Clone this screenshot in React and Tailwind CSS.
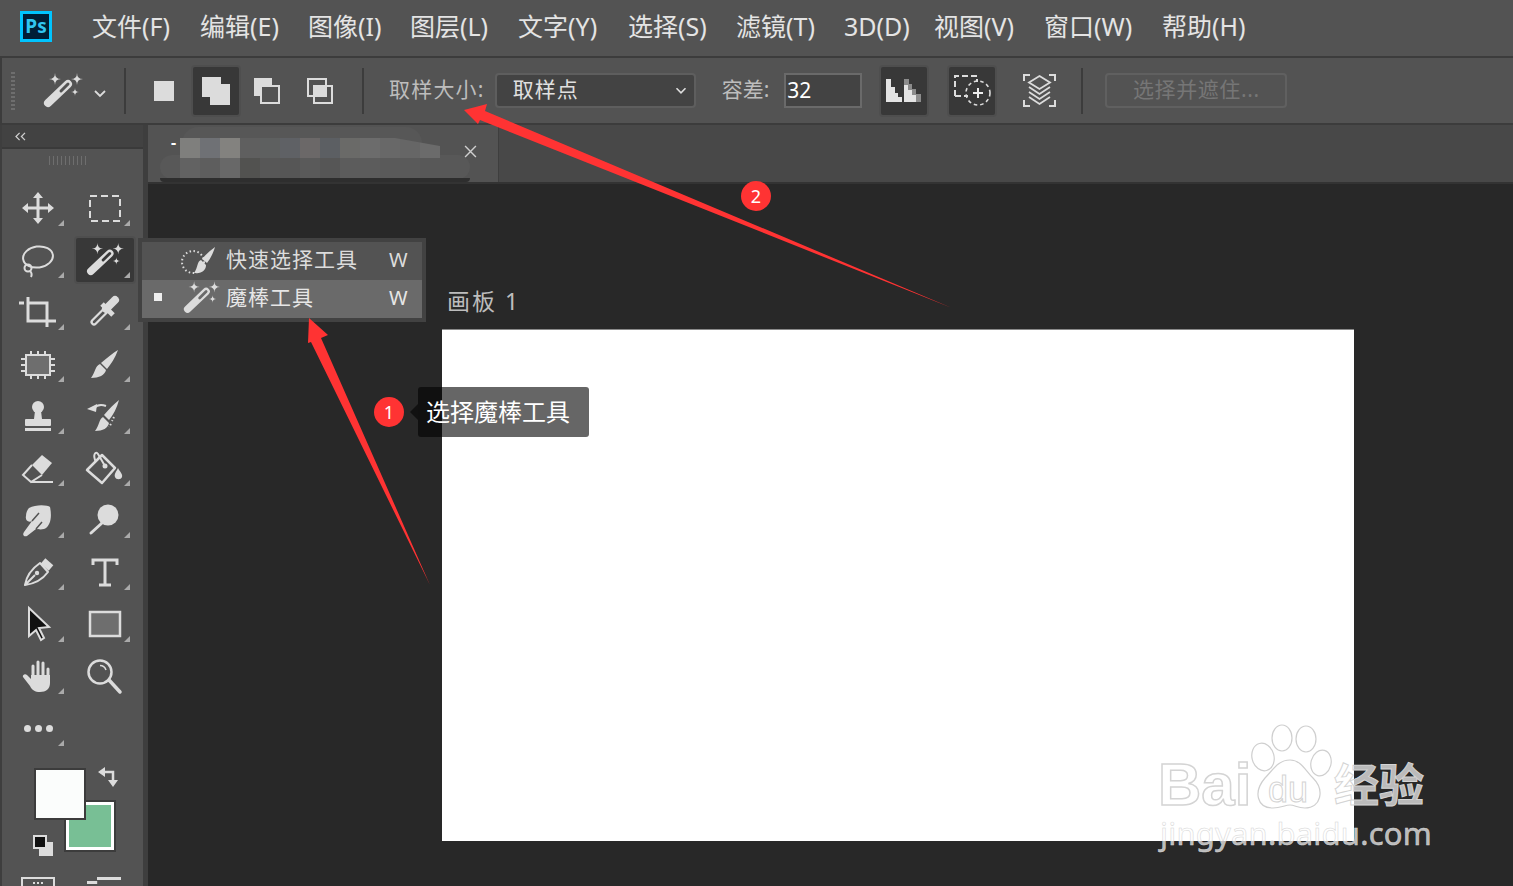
import React from "react";

const L = "#dcdcdc";
const star = (cx, cy, r) => `M${cx} ${cy - r}Q${cx} ${cy} ${cx + r} ${cy}Q${cx} ${cy} ${cx} ${cy + r}Q${cx} ${cy} ${cx - r} ${cy}Q${cx} ${cy} ${cx} ${cy - r}Z`;

function Wand({ bg = "#535353", className = "w-[40px] h-[36px]" }) {
  return (
    <svg viewBox="0 0 40 36" className={className}>
      <path d={star(12, 6, 6) + star(34, 6, 6) + star(32, 19, 4)} fill={L} />
      <line x1="5" y1="30" x2="25" y2="11" stroke={L} strokeWidth="8" strokeLinecap="round" />
      <line x1="18" y1="18" x2="25" y2="11" stroke={bg} strokeWidth="3" strokeLinecap="round" />
    </svg>
  );
}

const S = { fill: "none", stroke: L, strokeWidth: 2.5 };
const icons = {
  move: <g><path d="M20 8V32M8 20H32" {...S} strokeWidth="3" /><path d="M20 4l5 6H15zM20 36l5-6H15zM4 20l6-5V25zM36 20l-6-5V25z" fill={L} /></g>,
  marquee: <rect x="5" y="8" width="30" height="25" {...S} strokeWidth="2" strokeDasharray="7 4" />,
  lasso: <g {...S} strokeWidth="2"><ellipse cx="20" cy="17" rx="15" ry="10.5" transform="rotate(-8 20 17)" /><circle cx="10" cy="28" r="3.5" /><path d="M12 31C14 33 14 35 13 37" /></g>,
  crop: <path d="M1 11H6M10 5V29H32M10 11H29V35M32 29H38" {...S} strokeWidth="3" />,
  dropper: <g><line x1="9" y1="30" x2="22" y2="17" stroke={L} strokeWidth="7" strokeLinecap="round" /><line x1="9" y1="30" x2="21" y2="18" stroke="#535353" strokeWidth="2.5" strokeLinecap="round" /><line x1="21" y1="17" x2="30" y2="8" stroke={L} strokeWidth="8" strokeLinecap="round" /><line x1="17" y1="12" x2="28" y2="23" stroke={L} strokeWidth="5" /></g>,
  chip: <g><path d="M13 7V35M20 7V35M27 7V35M3 15H37M3 21H37M3 27H37" {...S} strokeWidth="2" /><rect x="8" y="11" width="24" height="20" fill="#6e6e6e" stroke={L} strokeWidth="2" /></g>,
  brush: <path d="M33 6C30 14 26 20 22 25L16 19C22 14 28 9 33 6ZM15 20C10 22 10 29 6 34C14 34 20 31 21 26Z" fill={L} />,
  stamp: <g fill={L}><circle cx="20" cy="11" r="6" /><path d="M17 15H23L24 23H16Z" /><rect x="7" y="23" width="26" height="7" rx="1" /><rect x="7" y="32" width="26" height="3" /></g>,
  history: <g><path d="M34 4C32 12 28 19 24 24L19 19C24 13 29 8 34 4ZM18 21C14 23 14 30 10 35C18 35 23 32 24 27Z" fill={L} /><path d="M21 10C16 8 12 9 9 12" {...S} strokeWidth="2" /><path d="M2 13L12 8L11 16Z" fill={L} /><path d="M29 21L27 25M26 28L24 31" {...S} strokeWidth="2" strokeDasharray="1.5 2" /></g>,
  eraser: <g><path d="M24 7L34 15L24 27L14 17Z" fill={L} /><path d="M14 17L5 27L13 34L24 27M13 34H35" {...S} strokeWidth="2" /></g>,
  bucket: <g><path d="M2 22L17 7L30 20L17 35Z" {...S} strokeWidth="2.5" strokeLinejoin="round" /><path d="M11 14C7 6 11 3 13 6L20 18" {...S} strokeWidth="2" /><circle cx="20" cy="18" r="2.5" fill={L} /><path d="M33 20C31 24 29 26 30 29C31 32 36 32 37 29C38 26 35 24 33 20Z" fill={L} /></g>,
  smudge: <g><path d="M11 8C18 4 30 5 32 7C34 16 33 26 26 29C22 30 20 29 18 29L9 36C6 37 4 35 6 32L14 21C10 23 7 20 8 16C8 13 9 10 11 8Z" fill={L} /><path d="M14 21L21 13M18 29L24 22" stroke="#535353" strokeWidth="1.5" /></g>,
  dodge: <g><circle cx="23" cy="15" r="10.5" fill={L} /><line x1="6" y1="33" x2="17" y2="23" stroke={L} strokeWidth="3" strokeLinecap="round" /></g>,
  pen: <g><path d="M7 33Q9 20 22 11L30 20Q22 31 7 33ZM7 33L17 23" {...S} strokeWidth="2" strokeLinejoin="round" /><line x1="25" y1="9" x2="33" y2="16" stroke={L} strokeWidth="7" /><circle cx="19" cy="21" r="2.2" fill={L} /></g>,
  type: <path d="M8 13V8H32V13M20 8V33M14 33H26" {...S} strokeWidth="3" />,
  select: <path d="M11 4L31 23L21 24L26 34L23 36L18 26L11 32Z" fill="#111" stroke={L} strokeWidth="2" />,
  rect: <rect x="5" y="8" width="30" height="24" fill="#6e6e6e" stroke={L} strokeWidth="2.5" />,
  hand: <g><path d="M15 20V10M20 20V6M25 20V7M30 23V13" stroke={L} strokeWidth="3" strokeLinecap="round" /><path d="M13 19H32V27C32 33 28 36 22 36C17 36 14 34 12 30L5 21C4 19 7 17 9 19L13 23Z" fill={L} /></g>,
  zoom: <g {...S} strokeWidth="2.5"><circle cx="15" cy="16" r="11.5" /><path d="M24 24L35 36" strokeWidth="3.5" strokeLinecap="round" /><path d="M15 9.5C18 9.5 20 11 21 14" strokeWidth="1.5" /></g>,
};

function Tool({ name, active, corner = true, col }) {
  return (
    <div className="relative flex items-center justify-center">
      {active && <div className="absolute left-[2px] right-[2px] top-[2px] bottom-[2px] rounded-[4px] bg-[#383838] border-2 border-[#4e4e4e]" />}
      {active ? (
        <div className="relative"><Wand bg="#383838" className="w-[38px] h-[34px]" /></div>
      ) : (
        <svg viewBox="0 0 40 40" className="w-[40px] h-[40px] relative">{icons[name]}</svg>
      )}
      {corner && <div className={`absolute bottom-[8px] ${col === 1 ? "right-[7px]" : "right-[8px]"} w-[6px] h-[6px] bg-[#aaaaaa] [clip-path:polygon(100%_0,100%_100%,0_100%)]`} />}
    </div>
  );
}

const tools = [
  ["move", "marquee"], ["lasso", "wand"], ["crop", "dropper"], ["chip", "brush"], ["stamp", "history"],
  ["eraser", "bucket"], ["smudge", "dodge"], ["pen", "type"], ["select", "rect"], ["hand", "zoom"],
];
const menu = [
  ["文件(F)", "w-[108px]"], ["编辑(E)", "w-[108px]"], ["图像(I)", "w-[102px]"], ["图层(L)", "w-[108px]"],
  ["文字(Y)", "w-[110px]"], ["选择(S)", "w-[108px]"], ["滤镜(T)", "w-[108px]"], ["3D(D)", "w-[90px]"],
  ["视图(V)", "w-[110px]"], ["窗口(W)", "w-[118px]"], ["帮助(H)", "w-[90px]"],
];
const row1 = ["#7f7f7d", "#6f7175", "#83827f", "#5f5f5f", "#5e6060", "#5f6165", "#6b6868", "#5c5f63", "#6a6a68", "#6c6c6c", "#686868", "#666666", "#6b6b6b"];
const row2 = ["#626262", "#5e5e5e", "#686868", "#525250", "#575757", "#565656", "#5a5a5a", "#565656", "#5c5c5c", "#5c5c5c", "#5a5a5a", "#5a5a5a", "#585858"];

const DarkBtn = ({ children, cls }) => (
  <div className={`w-[50px] h-[52px] shrink-0 rounded-[4px] bg-[#383838] border-2 border-[#4e4e4e] flex items-center justify-center ${cls}`}>{children}</div>
);
const Sep = ({ cls }) => <div className={`w-[2px] h-[46px] bg-[#3c3c3c] shrink-0 ${cls}`} />;
const Chevron = ({ cls }) => (
  <svg viewBox="0 0 12 8" className={`w-[12px] h-[8px] shrink-0 ${cls}`}><path d="M1 1L6 6L11 1" fill="none" stroke={L} strokeWidth="1.8" /></svg>
);

export default function App() {
  return (
    <div className="relative w-[1513px] h-[886px] overflow-hidden bg-[#282828] flex flex-col font-['Noto_Sans','Noto_Sans_CJK_SC',sans-serif]">
      {/* menu bar */}
      <div className="h-[56px] bg-[#535353] flex items-center shrink-0">
        <div className="ml-[20px] w-[32px] h-[31px] mb-[3px] border-[3px] border-[#00c4ff] bg-[#001e36] text-[#31c5f0] flex items-center justify-center text-[19px] font-bold leading-none">Ps</div>
        <div className="ml-[40px] mb-[3px] flex text-[25px] leading-none text-[#e4e4e4]">
          {menu.map(([m, w]) => <span key={m} className={`whitespace-nowrap ${w}`}>{m}</span>)}
        </div>
      </div>
      {/* options bar */}
      <div className="h-[69px] shrink-0 bg-[#535353] border-y-2 border-[#3c3c3c] flex items-center border-l-2">
        <div className="ml-[9px] w-[4px] h-[38px] shrink-0 [background:repeating-linear-gradient(#6e6e6e_0_2px,transparent_2px_4px)]" />
        <div className="ml-[28px] shrink-0"><Wand /></div>
        <Chevron cls="ml-[11px] mt-[7px]" />
        <Sep cls="ml-[18px]" />
        <div className="ml-[28px] w-[20px] h-[20px] bg-[#dcdcdc] shrink-0" />
        <DarkBtn cls="ml-[17px]">
          <svg viewBox="0 0 30 30" className="w-[30px] h-[30px]"><path d="M1 1H20V8H29V29H9V21H1Z" fill={L} /></svg>
        </DarkBtn>
        <svg viewBox="0 0 28 28" className="w-[28px] h-[28px] ml-[12px] shrink-0"><path d="M1 1H19V8H8V19H1Z" fill={L} /><rect x="8" y="9" width="18" height="17" fill="none" stroke={L} strokeWidth="2" /></svg>
        <svg viewBox="0 0 28 28" className="w-[28px] h-[28px] ml-[25px] shrink-0"><rect x="2" y="2" width="18" height="17" fill="none" stroke={L} strokeWidth="2" /><rect x="8" y="9" width="18" height="17" fill="none" stroke={L} strokeWidth="2" /><rect x="9" y="10" width="10" height="8" fill={L} /></svg>
        <Sep cls="ml-[28px]" />
        <span className="ml-[25px] mb-[2px] text-[21px] text-[#bdbdbd] tracking-[1.2px] whitespace-nowrap leading-none">取样大小:</span>
        <div className="ml-[10px] w-[201px] h-[35px] shrink-0 rounded-[4px] bg-[#434343] border-2 border-[#5e5e5e] flex items-center pl-[16px] pr-[7px] justify-between">
          <span className="mb-[2px] text-[21px] text-[#e0e0e0] tracking-[1px] leading-none">取样点</span>
          <Chevron cls="scale-90" />
        </div>
        <span className="ml-[26px] mb-[2px] text-[21px] text-[#bdbdbd] leading-none whitespace-nowrap">容差:</span>
        <div className="ml-[15px] w-[78px] h-[35px] shrink-0 border-2 border-[#6a6a6a] bg-[#434343] flex items-center pl-[1px] text-[21px] text-white leading-none">32</div>
        <DarkBtn cls="ml-[17px]">
          <svg viewBox="0 0 36 24" className="w-[36px] h-[24px]">
            <path d="M0 0H5V8H9V14H12V18H16V23H0Z" fill="#e4e4e4" />
            <path d="M18 0H23V5H26V10H30V15H35V23H18Z" fill="#8c8c8c" />
            <path d="M18 6H22V11H26V16H30V23H18Z" fill="#e4e4e4" />
          </svg>
        </DarkBtn>
        <DarkBtn cls="ml-[18px]">
          <svg viewBox="0 0 38 33" className="w-[38px] h-[33px]">
            <path d="M2 22V2H24V8M2 22H15" fill="none" stroke={L} strokeWidth="2" strokeDasharray="6 3" />
            <circle cx="25" cy="19" r="12" fill="none" stroke={L} strokeWidth="1.6" strokeDasharray="3.5 3" />
            <path d="M25 14V24M20 19H30" stroke="#eeeeee" strokeWidth="2" />
          </svg>
        </DarkBtn>
        <svg viewBox="0 0 33 33" className="w-[33px] h-[33px] ml-[26px] shrink-0">
          <path d="M1 7V1H7M26 1H32V7M1 26V32H7M26 32H32V26" fill="none" stroke={L} strokeWidth="2" />
          <path d="M16.5 2L27 8.5L16.5 15L6 8.5Z" fill="none" stroke={L} strokeWidth="1.8" />
          <path d="M6 13L16.5 20L27 13M6 18L16.5 25L27 18M6 23L16.5 30L27 23" fill="none" stroke={L} strokeWidth="1.8" />
        </svg>
        <Sep cls="ml-[25px]" />
        <div className="ml-[22px] w-[182px] h-[35px] shrink-0 rounded-[4px] border-2 border-[#606060] flex items-center justify-center text-[21px] text-[#767676] leading-none whitespace-nowrap tracking-[0.6px]"><span className="mb-[2px]">选择并遮住...</span></div>
      </div>
      {/* body */}
      <div className="flex-1 flex min-h-0">
        {/* toolbar */}
        <div className="w-[148px] shrink-0 border-l-2 border-r-[5px] border-[#3e3e3e] bg-[#535353] flex flex-col overflow-hidden">
          <div className="h-[24px] bg-[#424242] border-b-2 border-[#3a3a3a] shrink-0 pl-[12px] flex items-center">
            <svg viewBox="0 0 14 10" className="w-[13px] h-[9px]"><path d="M6 1L2 5L6 9M12 1L8 5L12 9" fill="none" stroke="#cfcfcf" strokeWidth="1.4" /></svg>
          </div>
          <div className="h-[33px] shrink-0 flex justify-center pt-[7px] pr-[8px]">
            <div className="w-[39px] h-[9px] [background:repeating-linear-gradient(90deg,#6e6e6e_0_1.5px,transparent_1.5px_4px)]" />
          </div>
          <div className="ml-[3px] grid grid-cols-[66px_66px] gap-x-[1px] auto-rows-[52px] shrink-0">
            {tools.map(([a, b]) => (
              <React.Fragment key={a}>
                <Tool name={a} col={1} />
                <Tool name={b} col={2} active={b === "wand"} corner={b !== "zoom"} />
              </React.Fragment>
            ))}
            <div className="relative flex items-center justify-center gap-[4px]">
              <div className="w-[7px] h-[7px] rounded-full bg-[#dcdcdc]" />
              <div className="w-[7px] h-[7px] rounded-full bg-[#dcdcdc]" />
              <div className="w-[7px] h-[7px] rounded-full bg-[#dcdcdc]" />
              <div className="absolute bottom-[8px] right-[7px] w-[6px] h-[6px] bg-[#aaaaaa] [clip-path:polygon(100%_0,100%_100%,0_100%)]" />
            </div>
          </div>
          {/* colours */}
          <div className="relative h-[123px] shrink-0">
            <div className="absolute left-[62px] top-[46px] w-[52px] h-[52px] bg-[#78bf95] border-[2px] border-[#3c3c3c] shadow-[inset_0_0_0_3px_#ffffff]" />
            <div className="absolute left-[32px] top-[14px] w-[52px] h-[52px] bg-[#fbfdfc] border-[2px] border-[#3c3c3c]" />
            <svg viewBox="0 0 20 20" className="absolute left-[96px] top-[13px] w-[20px] h-[20px]">
              <path d="M6 5H15V14" fill="none" stroke={L} strokeWidth="2.5" />
              <path d="M0 5L7 0V10ZM10 13H20L15 20Z" fill={L} />
            </svg>
            <div className="absolute left-[37px] top-[88px] w-[14px] h-[14px] bg-[#dcdcdc]" />
            <div className="absolute left-[31px] top-[81px] w-[14px] h-[14px] bg-[#111111] border-2 border-[#dcdcdc]" />
          </div>
          <div className="ml-[19px] flex gap-[32px] shrink-0">
            <div className="w-[34px] h-[20px] border-2 border-[#dcdcdc] flex justify-center gap-[2px] pt-[3px]">
              <div className="w-[2px] h-[2px] bg-[#dcdcdc]" />
              <div className="w-[2px] h-[2px] bg-[#dcdcdc]" />
              <div className="w-[2px] h-[2px] bg-[#dcdcdc]" />
            </div>
            <div className="w-[34px] h-[20px] flex flex-col items-end">
              <div className="w-[24px] h-[3px] bg-[#dcdcdc]" />
              <div className="w-full h-[3px] mt-[1px] bg-[#dcdcdc] [clip-path:polygon(0_0,30%_0,30%_100%,100%_100%,100%_0,100%_100%,0_100%)]" />
            </div>
          </div>
        </div>
        {/* document */}
        <div className="flex-1 min-w-0 flex flex-col">
          <div className="h-[59px] shrink-0 bg-[#484848] border-b-[2px] border-[#333333] flex">
            <div className="relative w-[351px] h-full bg-[#535353] border-r border-[#3e3e3e] overflow-hidden">
              <div className="absolute left-[34px] top-[2px] w-[240px] h-[30px] rounded-t-[16px] bg-[#575757]" />
              <div className="absolute left-[12px] top-[30px] w-[310px] h-[24px] rounded-[12px] bg-[#585858]" />
              <div className="absolute left-[12px] top-[53px] w-[310px] h-[4px] rounded-b-[6px] bg-[#2e2e2e]" />
              <span className="absolute left-[23px] top-[9px] text-white text-[16px] font-bold leading-none">-</span>
              <div className="absolute left-[32px] top-[13px] w-[260px] flex flex-col [clip-path:polygon(0_0,215px_0,260px_8px,260px_100%,0_100%)]">
                {[row1, row2].map((r, i) => (
                  <div key={i} className="flex h-[20px]">
                    {r.map((c, j) => <div key={j} className="w-[20px] h-[20px]" style={{ background: c }} />)}
                  </div>
                ))}
              </div>
              <svg viewBox="0 0 12 12" className="absolute left-[316px] top-[20px] w-[13px] h-[13px]"><path d="M1 1L11 11M11 1L1 11" stroke="#cfcfcf" strokeWidth="1.3" /></svg>
            </div>
          </div>
          <div className="flex-1 min-h-0 pl-[294px] pt-[104px]">
            <div className="h-[41px] pl-[5px] text-[23px] leading-[26px] text-[#bdbdbd] tracking-[2px]">画板 1</div>
            <div className="w-[912px] h-[512px] bg-white border-t border-[#8a8a8a]" />
          </div>
        </div>
      </div>

      {/* flyout */}
      <div className="absolute left-[138px] top-[238px] w-[288px] border-4 border-[#424242] text-[21px] leading-none">
        <div className="h-[38px] bg-[#535353] flex items-center relative text-[#dcdcdc]">
          <svg viewBox="0 0 38 30" className="absolute left-[38px] top-[4px] w-[38px] h-[30px]">
            <circle cx="13" cy="16" r="11" fill="none" stroke={L} strokeWidth="2" strokeDasharray="1.5 2.5" />
            <path d="M35 1C33 8 30 13 27 17L22 13C26 8 31 4 35 1ZM21 14C17 15 18 22 14 27C22 28 26 24 26 19Z" fill={L} />
          </svg>
          <span className="absolute left-[84px] top-[7px] tracking-[1px] whitespace-nowrap">快速选择工具</span>
          <span className="absolute left-[247px] top-[8px] text-[20px]">W</span>
        </div>
        <div className="h-[38px] bg-[#6a6a6a] flex items-center relative text-[#e6e6e6]">
          <div className="absolute left-[12px] top-[13px] w-[8px] h-[8px] bg-[#eeeeee]" />
          <div className="absolute left-[41px] top-[1px]"><Wand bg="#6a6a6a" className="w-[37px] h-[34px]" /></div>
          <span className="absolute left-[84px] top-[7px] tracking-[1px] whitespace-nowrap">魔棒工具</span>
          <span className="absolute left-[247px] top-[8px] text-[20px]">W</span>
        </div>
      </div>

      {/* tooltip */}
      <div className="absolute left-[418px] top-[387px] w-[171px] h-[50px] rounded-[3px] bg-black/60 flex items-center pl-[8px] text-[24px] text-white leading-none whitespace-nowrap">
        选择魔棒工具
        <div className="absolute left-[-8px] top-[17px] w-0 h-0 border-y-[8px] border-y-transparent border-r-[8px] border-r-[#111111]" />
      </div>

      {/* annotation arrows */}
      <svg viewBox="0 0 1513 886" className="absolute inset-0 w-[1513px] h-[886px] pointer-events-none">
        <path d="M309 318L328 335L321 338L430 585L311 342L308 343Z" fill="#ff3333" />
        <path d="M464 110L487 104L485 111L952 308L480 120L478 124Z" fill="#ff3333" />
      </svg>
      <div className="absolute left-[374px] top-[397px] w-[30px] h-[30px] rounded-full bg-[#ff3333] text-white flex items-center justify-center text-[18px] leading-none">1</div>
      <div className="absolute left-[741px] top-[181px] w-[30px] h-[30px] rounded-full bg-[#ff3333] text-white flex items-center justify-center text-[18px] leading-none">2</div>

      {/* watermark */}
      <svg viewBox="0 0 90 95" className="absolute left-[1245px] top-[720px] w-[90px] h-[95px] pointer-events-none">
        <g fill="#ffffff" fillOpacity="0.6" stroke="#cfcfcf" strokeWidth="1.2">
          <ellipse cx="18" cy="37" rx="11" ry="14" transform="rotate(-15 18 37)" />
          <ellipse cx="37" cy="18" rx="10" ry="13" />
          <ellipse cx="61" cy="19" rx="10" ry="13" />
          <ellipse cx="76" cy="43" rx="10" ry="13" transform="rotate(15 76 43)" />
          <path d="M45 40C56 40 60 50 68 58C80 70 76 88 60 88C52 88 50 85 45 85C40 85 36 88 28 88C12 88 8 72 20 58C28 50 33 40 45 40Z" />
        </g>
      </svg>
      <div className="absolute left-[1158px] top-[750px] text-[60px] leading-[70px] font-bold font-['Liberation_Sans',sans-serif] text-white/70 [-webkit-text-stroke:1.5px_#d4d4d4] pointer-events-none">Bai</div>
      <div className="absolute left-[1268px] top-[770px] text-[36px] leading-[40px] font-['Liberation_Sans',sans-serif] text-white/70 [-webkit-text-stroke:1px_#d4d4d4] pointer-events-none">du</div>
      <div className="absolute left-[1334px] top-[757px] text-[45px] leading-[56px] font-bold text-white/70 [-webkit-text-stroke:1px_#d4d4d4] pointer-events-none whitespace-nowrap">经验</div>
      <div className="absolute left-[1160px] top-[814px] text-[31px] leading-[38px] tracking-[0.2px] text-white/70 [-webkit-text-stroke:0.5px_#d4d4d4] pointer-events-none whitespace-nowrap">jingyan.baidu.com</div>
    </div>
  );
}
